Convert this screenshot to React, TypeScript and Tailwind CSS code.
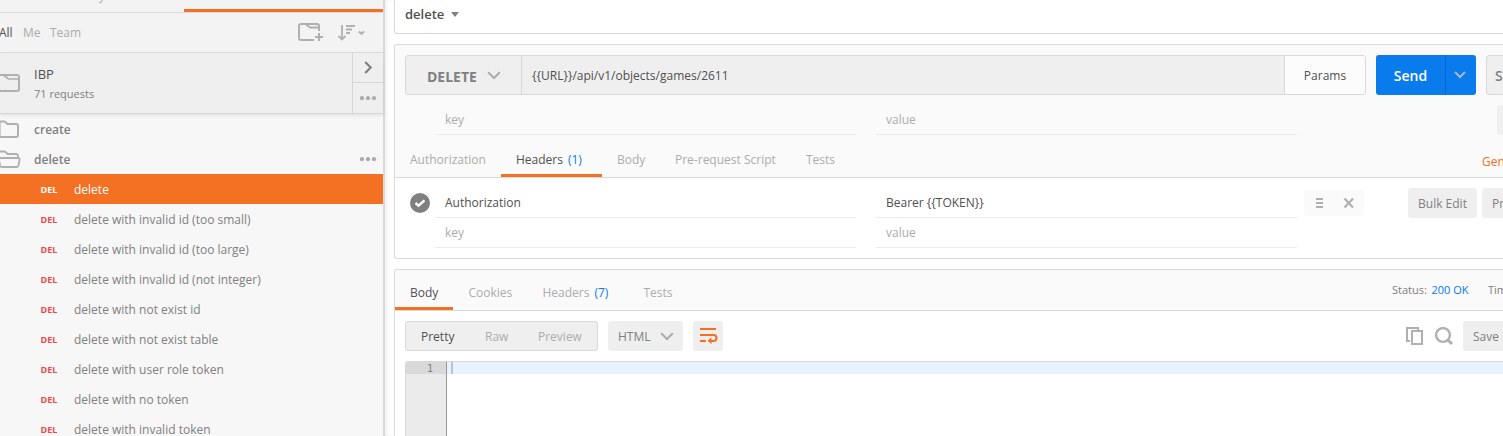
import React from "react";

type IconProps = { className?: string };

const requests: string[] = [
  "delete",
  "delete with invalid id (too small)",
  "delete with invalid id (too large)",
  "delete with invalid id (not integer)",
  "delete with not exist id",
  "delete with not exist table",
  "delete with user role token",
  "delete with no token",
  "delete with invalid token",
];

function NewFolderIcon() {
  return (
    <svg width="26" height="20" viewBox="0 0 26 20" fill="none" stroke="#b0b0b0" strokeWidth="2" className="shrink-0">
      <path d="M16 17H3Q1 17 1 15V3Q1 1 3 1H19Q21 1 21 3V8" />
      <path d="M8 1.500 12 4.500H21" strokeWidth="1.800" />
      <path d="M17 14H25M21 10V18" />
    </svg>
  );
}

function SortIcon() {
  return (
    <svg width="28" height="18" viewBox="0 0 28 18" fill="none" stroke="#b0b0b0" strokeWidth="1.800" className="shrink-0">
      <path d="M4 1V15.500M.6 12 4 15.500 7.400 12" />
      <path d="M8 2H17M8 5.500H14M8 9H12" />
      <path d="M21 7.500 23.500 9.800 26 7.500" strokeWidth="2" />
    </svg>
  );
}

function CollectionIcon() {
  return (
    <svg width="21" height="20" viewBox="0 0 21 20" fill="none" stroke="#b0b0b0" strokeWidth="2" className="shrink-0">
      <path d="M-4 1H17Q19 1 19 3V15Q19 17 17 17H1Q-1 17 -1 15" />
      <path d="M4 1.500 8.500 5H19" strokeWidth="1.600" />
    </svg>
  );
}

function FolderIcon() {
  return (
    <svg width="20" height="20" viewBox="0 0 20 20" fill="none" stroke="#b0b0b0" strokeWidth="2" className="shrink-0">
      <path d="M0 1.500H4Q5 1.500 5.800 2.500L7.500 4H16Q18 4 18 6V15Q18 17 16 17H1.500Q0 17 -.4 16V2" />
    </svg>
  );
}

function OpenFolderIcon() {
  return (
    <svg width="22" height="20" viewBox="0 0 22 20" fill="none" stroke="#b0b0b0" strokeWidth="1.800" className="shrink-0">
      <path d="M-1 7V1.500H4Q5 1.500 6 2.500L7.500 4H16Q18 4 18 6V7.500" />
      <path d="M-2 8H18Q20 8 19.600 10L18.300 16Q18 17 16.500 17H2Q.5 17 .2 16L-1 10" />
    </svg>
  );
}

function Dots() {
  return (
    <svg width="17" height="5" viewBox="0 0 17 5" fill="#acacac" className="shrink-0">
      <circle cx="2" cy="2.200" r="2.100" />
      <circle cx="8" cy="2.200" r="2.100" />
      <circle cx="14" cy="2.200" r="2.100" />
    </svg>
  );
}

function Chevron({ className = "" }: IconProps) {
  return (
    <svg width="14" height="9" viewBox="0 0 14 9" fill="none" stroke="currentColor" strokeWidth="2" className={`shrink-0 ${className}`}>
      <path d="M1.200 1.200 7 7 12.800 1.200" />
    </svg>
  );
}

function CheckIcon() {
  return (
    <svg width="20" height="20" viewBox="0 0 20 20" fill="none" className="shrink-0">
      <circle cx="10" cy="10" r="10" fill="#808080" />
      <path d="M5.500 10 8.500 12.700 14.500 7.300" stroke="#fff" strokeWidth="2.400" />
    </svg>
  );
}

function WrapIcon() {
  return (
    <svg width="18" height="17" viewBox="0 0 18 17" fill="none" stroke="#f47023" strokeWidth="2" className="shrink-0">
      <path d="M0 2H16M0 8H13.500Q16.500 8 16.500 11T13.500 14H10M0 14H6" />
      <path d="M11.500 10.500V17L7.500 13.800Z" fill="#f47023" stroke="none" />
    </svg>
  );
}

function CopyIcon() {
  return (
    <svg width="18" height="19" viewBox="0 0 18 19" fill="none" stroke="#b0b0b0" strokeWidth="2" className="shrink-0">
      <path d="M12 3V1H1V14H4" />
      <path d="M6 4H16V17H6Z" />
    </svg>
  );
}

function SearchIcon() {
  return (
    <svg width="19" height="19" viewBox="0 0 19 19" fill="none" stroke="#b0b0b0" strokeWidth="2.400" className="shrink-0">
      <circle cx="8" cy="8" r="6.900" />
      <path d="M12.500 12.500 17 17" strokeWidth="3" />
    </svg>
  );
}

function Sidebar() {
  return (
    <aside className="flex h-full w-[385px] shrink-0 flex-col border-r-2 border-[#d9d9d9] bg-[#f7f7f7]">
      <div className="relative flex h-[13px] shrink-0 justify-end border-b border-[#dbdbdb] bg-[#f3f3f3]">
        <span className="absolute left-[99px] -top-[12px] leading-4 text-[#a9a9a9]">y</span>
        <div className="mt-[9px] h-[3px] w-[199px] bg-[#f47023]" />
      </div>
      <div className="flex h-10 shrink-0 items-center border-b border-[#dbdbdb] bg-[#f3f3f3] text-[#acacac]">
        <span className="-ml-px w-6 text-[#505050]">All</span>
        <span className="w-[27px]">Me</span>
        <span className="w-[248px]">Team</span>
        <NewFolderIcon />
        <span className="ml-[14px]"><SortIcon /></span>
      </div>
      <div className="z-10 flex h-[61px] shrink-0 border-b border-[#d6d6d6] bg-[#efefef] shadow-[0_2px_4px_rgba(0,0,0,0.08)]">
        <div className="flex w-[352px] items-center">
          <div className="w-[34px] pt-px"><CollectionIcon /></div>
          <div className="pt-px">
            <div className="text-[13px] leading-[20px] text-[#505050]">IBP</div>
            <div className="text-[11px] leading-[19px] text-[#808080]">71 requests</div>
          </div>
        </div>
        <div className="flex w-[31px] flex-col border-l border-[#d6d6d6]">
          <div className="flex h-[30px] items-center justify-center border-b border-[#d6d6d6] text-[#808080]">
            <svg width="9" height="13" viewBox="0 0 9 13" fill="none" stroke="currentColor" strokeWidth="2.200">
              <path d="M1.200 1 6.700 6.500 1.200 12" />
            </svg>
          </div>
          <div className="flex h-[30px] items-center justify-center"><Dots /></div>
        </div>
      </div>
      <div className="flex h-[30px] shrink-0 items-center pt-px font-semibold text-[#808080]">
        <div className="w-[34px]"><FolderIcon /></div>
        create
      </div>
      <div className="flex h-[30px] shrink-0 items-center pt-px pr-[6px] font-semibold text-[#808080]">
        <div className="w-[34px]"><OpenFolderIcon /></div>
        <span className="flex-1">delete</span>
        <Dots />
      </div>
      {requests.map((name, i) => (
        <div
          key={name}
          className={
            i === 0
              ? "flex h-[30px] shrink-0 items-center bg-[#f47023] pt-[2px] pl-[40.5px] text-white"
              : "flex h-[30px] shrink-0 items-center pt-[2px] pl-[40.5px] text-[#808080]"
          }
        >
          <span className={i === 0 ? "w-[33.5px] text-[9px] font-bold" : "w-[33.5px] text-[9px] font-bold text-[#ed4b48]"}>DEL</span>
          <span>{name}</span>
        </div>
      ))}
    </aside>
  );
}

function KeyValueRow({ k, v, filled = false }: { k: string; v: string; filled?: boolean }) {
  const tone = filled ? "text-[#505050]" : "text-[#acacac]";
  return (
    <div className={`flex h-[30px] shrink-0 gap-5 ${tone}`}>
      <div className="flex w-[421px] items-center border-b border-[#ececec] pl-[10px]">{k}</div>
      <div className="flex w-[421px] items-center border-b border-[#ececec] pl-[10px]">{v}</div>
    </div>
  );
}

function RequestPanel() {
  return (
    <section className="mt-[10px] flex h-[215px] shrink-0 flex-col overflow-hidden rounded-l-[3px] border border-r-0 border-[#d9d9d9] bg-white">
      <div className="flex h-[133px] shrink-0 flex-col border-b border-[#d9d9d9] bg-[#fafafa]">
        <div className="flex h-[50px] shrink-0 pt-[10px] pl-[10px]">
          <div className="flex h-10 w-[961px] shrink-0 overflow-hidden rounded-[3px] border border-[#d9d9d9] bg-[#efefef]">
            <div className="flex w-[116px] items-center border-r border-[#d9d9d9] pl-[21px] text-[14px] font-bold text-[#808080]">
              <span className="w-[60px] pt-[2px]">DELETE</span>
              <Chevron className="text-[#acacac]" />
            </div>
            <div className="flex flex-1 items-center pt-[2px] pl-[10px] text-[#505050]">{"{{URL}}/api/v1/objects/games/2611"}</div>
            <div className="flex w-[81px] items-center justify-center border-l border-[#d9d9d9] bg-[#fcfcfc] pt-[2px] text-[#505050]">Params</div>
          </div>
          <div className="ml-[10px] flex h-10 w-[100px] shrink-0 overflow-hidden rounded-[3px] bg-[#097bed] text-white">
            <div className="flex w-[70px] items-center justify-center border-r border-[#0868c8] pt-px text-[14px] font-semibold">Send</div>
            <div className="flex w-[30px] items-center justify-center pr-[2px] pb-px">
              <svg width="12" height="8" viewBox="0 0 12 8" fill="none" stroke="#a9b5c2" strokeWidth="2">
                <path d="M1 1 6 6 11 1" />
              </svg>
            </div>
          </div>
          <div className="ml-[10px] flex h-10 w-[60px] shrink-0 items-center rounded-[3px] border border-[#d9d9d9] bg-[#efefef] pl-2 pt-px text-[14px] font-semibold text-[#808080]">Save</div>
        </div>
        <div className="flex h-[40px] shrink-0 pt-[10px] pl-10">
          <KeyValueRow k="key" v="value" />
          <div className="ml-[200px] h-[30px] w-20 shrink-0 rounded-[3px] bg-[#efefef]" />
        </div>
        <div className="flex h-[42px] shrink-0 text-[#acacac]">
          <div className="w-[106px] shrink-0 pl-[15px] leading-[50px]">Authorization</div>
          <div className="flex w-[101px] shrink-0 gap-[5px] border-b-[3px] border-[#f47023] pl-[15px] leading-[50px] text-[#505050]">
            Headers <span className="text-[#097bed]">(1)</span>
          </div>
          <div className="w-[58px] shrink-0 pl-[15px] leading-[50px]">Body</div>
          <div className="w-[131px] shrink-0 pl-[15px] leading-[50px]">Pre-request Script</div>
          <div className="w-[676px] shrink-0 pl-[15px] leading-[50px]">Tests</div>
          <div className="shrink-0 pl-[15px] leading-[53px] text-[#f47023]">Generate Code</div>
        </div>
      </div>
      <div className="flex pt-[10px] pl-[15px]">
        <div className="w-[25px] shrink-0 pt-[5px]"><CheckIcon /></div>
        <div className="shrink-0">
          <KeyValueRow k="Authorization" v="Bearer {{TOKEN}}" filled />
          <KeyValueRow k="key" v="value" />
        </div>
        <div className="mt-[2px] ml-[7px] flex h-[26px] w-[60px] shrink-0 items-center rounded-[3px] bg-[#fafafa] pl-[12px]">
          <svg width="38" height="12" viewBox="0 0 38 12" fill="none" stroke="#b0b0b0" strokeWidth="2">
            <path d="M0 2H7M0 6H7M0 10H7" />
            <path d="M28.500 1.500 37 10.500M37 1.500 28.500 10.500" strokeWidth="2.200" />
          </svg>
        </div>
        <div className="ml-[44px] flex h-[30px] w-[69px] shrink-0 items-center justify-center rounded-[3px] bg-[#efefef] pt-px text-[#808080]">Bulk Edit</div>
        <div className="ml-[5px] flex h-[30px] w-[70px] shrink-0 items-center rounded-[3px] bg-[#efefef] pt-px pl-[10px] text-[#808080]">Presets</div>
      </div>
    </section>
  );
}

function ResponsePanel() {
  return (
    <section className="mt-[10px] flex h-[220px] shrink-0 flex-col overflow-hidden rounded-tl-[3px] border-t border-l border-[#d9d9d9] bg-white">
      <div className="flex h-[41px] shrink-0 border-b border-[#d9d9d9] bg-[#fafafa] leading-[46px] text-[#acacac]">
        <div className="w-[58px] shrink-0 border-b-[3px] border-[#f47023] pl-[15px] text-[#505050]">Body</div>
        <div className="w-[74px] shrink-0 pl-[15.5px]">Cookies</div>
        <div className="flex w-[101px] shrink-0 gap-[5px] pl-[15.5px]">
          Headers <span className="text-[#097bed]">(7)</span>
        </div>
        <div className="w-[764px] shrink-0 pl-[15.5px]">Tests</div>
        <div className="flex shrink-0 text-[11px] leading-[40px] text-[#808080]">
          <span className="w-[39.5px]">Status:</span>
          <span className="w-[56.5px] font-medium text-[#097bed]">200 OK</span>
          <span>Time:</span>
        </div>
      </div>
      <div className="flex h-[50px] shrink-0 items-start pt-[10px] pl-[10px]">
        <div className="flex h-[30px] w-[193px] shrink-0 items-center rounded-[3px] border border-[#d9d9d9] bg-[#efefef] pt-px pl-[15px] text-[#acacac]">
          <span className="w-[64px] text-[#505050]">Pretty</span>
          <span className="w-[53px]">Raw</span>
          <span>Preview</span>
        </div>
        <div className="ml-[10px] flex h-[30px] w-[75px] shrink-0 items-center rounded-[3px] bg-[#efefef] pl-[10px] text-[#808080]">
          <span className="w-[42px] pt-px">HTML</span>
          <Chevron className="text-[#acacac]" />
        </div>
        <div className="ml-[10px] flex h-[30px] w-[30px] shrink-0 items-start rounded-[3px] bg-[#efefef] pt-[6px] pl-[7px]"><WrapIcon /></div>
        <div className="ml-[683px] flex shrink-0 gap-[11px] pt-[6px]">
          <CopyIcon />
          <SearchIcon />
        </div>
        <div className="ml-[9px] flex h-[30px] w-[110px] shrink-0 items-center rounded-[3px] bg-[#efefef] pt-px pl-[10px] text-[#808080]">Save Response</div>
      </div>
      <div className="ml-[10px] flex flex-1 overflow-hidden rounded-tl-[3px] border-t border-l border-[#d9d9d9]">
        <div className="w-[41px] shrink-0 border-r border-[#9a9a9a] bg-[#ebebeb]">
          <div className="h-[12px] bg-[#d9d9d9] pr-[13px] text-right font-['DejaVu_Sans_Mono',monospace] text-[10px] leading-[13px] text-[#808080]">1</div>
        </div>
        <div className="h-[12px] flex-1 bg-[#e8f2fe] pl-[4px]">
          <div className="h-[12px] w-[2px] bg-[#b7c1cf]" />
        </div>
      </div>
    </section>
  );
}

export default function App() {
  return (
    <div className="flex h-[436px] w-[1503px] overflow-hidden bg-white font-['Open_Sans',sans-serif] text-[12px] whitespace-nowrap">
      <Sidebar />
      <main className="flex w-[1118px] flex-col overflow-hidden pl-[9px] shadow-[inset_2px_0_3px_rgba(0,0,0,0.06)]">
        <div className="flex h-[34px] shrink-0 items-center gap-[7px] rounded-bl-[3px] border-b border-l border-[#d9d9d9] bg-white pb-[3px] pl-[10px] text-[13px] font-semibold text-[#505050]">
          delete
          <svg width="8" height="5" viewBox="0 0 8 5" fill="#808080" className="mb-px"><path d="M0 0H8L4 5Z" /></svg>
        </div>
        <RequestPanel />
        <ResponsePanel />
      </main>
    </div>
  );
}
